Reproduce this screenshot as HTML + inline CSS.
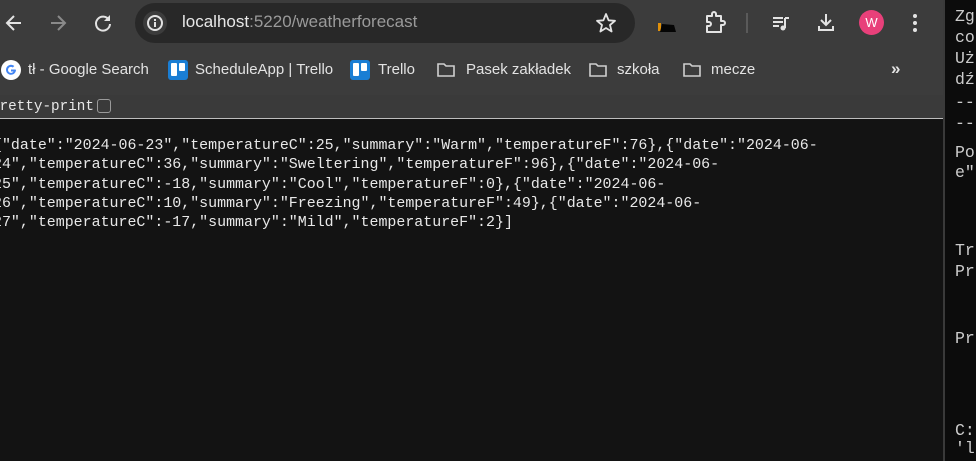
<!DOCTYPE html>
<html><head><meta charset="utf-8"><style>
*{margin:0;padding:0;box-sizing:border-box}
body{width:976px;height:461px;overflow:hidden;background:#131313;position:relative;font-family:"Liberation Sans",sans-serif}
.abs{position:absolute}
#top{left:0;top:0;width:943px;height:95px;background:#3c3c3c}
#omni{left:135px;top:3px;width:500px;height:40px;border-radius:20px;background:#282828}
.bm{position:absolute;top:61px;font-size:15px;color:#e3e3e3;white-space:nowrap}
#pp{left:0;top:95px;width:943px;height:24px;background:#3a3a3a;border-bottom:1px solid #bdbdbd}
#json{left:-7px;top:137px;font-family:"Liberation Mono",monospace;font-size:14.95px;line-height:19.3px;color:#e8e8e8;white-space:pre}
#term{left:943px;top:0;width:33px;height:461px;background:#0c0c0c;border-left:2px solid #3a3a3a}
.t{position:absolute;left:10px;font-family:"Liberation Mono","Noto Sans CJK JP",monospace;font-size:16.5px;color:#cccccc;white-space:pre}
svg{position:absolute}
</style></head><body>
<div id="top" class="abs"></div>
<div id="omni" class="abs"></div>
<svg style="left:3px;top:12px" width="22" height="22" viewBox="0 0 22 22"><path d="M18 11H5M11 4L4 11L11 18" stroke="#e3e3e3" stroke-width="2" fill="none"/></svg>
<svg style="left:47px;top:12px" width="22" height="22" viewBox="0 0 22 22"><path d="M4 11H17M11 4L18 11L11 18" stroke="#8a8a8a" stroke-width="2" fill="none"/></svg>
<svg style="left:92px;top:12px" width="22" height="22" viewBox="0 0 22 22"><path d="M17 8A7 7 0 1 0 18 12" stroke="#e3e3e3" stroke-width="2" fill="none"/><path d="M18 3V9H12Z" fill="#e3e3e3"/></svg>
<svg style="left:143px;top:11px" width="24" height="24" viewBox="0 0 24 24"><circle cx="12" cy="12" r="12" fill="#3c3c3c"/><circle cx="12" cy="12" r="7" stroke="#e3e3e3" stroke-width="2" fill="none"/><rect x="11" y="11" width="2" height="5" fill="#e3e3e3"/><rect x="11" y="8" width="2" height="2" fill="#e3e3e3"/></svg>
<div class="abs" style="left:182px;top:12px;font-size:17px;color:#e8e8e8">localhost<span style="color:#9a9a9a">:5220/weatherforecast</span></div>
<svg style="left:595px;top:12px" width="22" height="22" viewBox="0 0 22 22"><path d="M11 2L13.6 8.3L20 8.8L15 13L16.6 19.5L11 16L5.4 19.5L7 13L2 8.8L8.4 8.3Z" stroke="#e3e3e3" stroke-width="1.8" fill="none" stroke-linejoin="round"/></svg>
<svg style="left:656px;top:18px" width="22" height="16" viewBox="0 0 22 16"><path d="M2 5h3v8H2z" fill="#e0900a"/><path d="M4 14L6 6L18 7L20 14Z" fill="#050505"/></svg>
<svg style="left:704px;top:11px" width="22" height="24" viewBox="0 0 22 24"><path d="M3 5H8V3A2 2 0 0 1 12 3V5H17V10H19A2 2 0 0 1 19 14H17V21H3V15H5A2 2 0 0 0 5 11H3Z" stroke="#e3e3e3" stroke-width="2" fill="none" stroke-linejoin="round"/></svg>
<div class="abs" style="left:746px;top:13px;width:2px;height:20px;background:#5a5a5a"></div>
<svg style="left:770px;top:12px" width="22" height="22" viewBox="0 0 22 22"><path d="M3 6h10M3 10h10M3 14h6" stroke="#e3e3e3" stroke-width="2"/><path d="M15 6h4M15 6v10" stroke="#e3e3e3" stroke-width="2"/><circle cx="13" cy="16" r="2.5" fill="#e3e3e3"/></svg>
<svg style="left:815px;top:11px" width="22" height="22" viewBox="0 0 22 22"><path d="M11 3V14M6 9L11 14L16 9M4 15V19H18V15" stroke="#e3e3e3" stroke-width="2" fill="none"/></svg>
<div class="abs" style="left:859px;top:10px;width:25px;height:25px;border-radius:50%;background:#e8407a;color:#fff;font-size:13px;text-align:center;line-height:25px">W</div>
<svg style="left:910px;top:12px" width="10" height="22" viewBox="0 0 10 22"><circle cx="5" cy="4" r="2" fill="#e3e3e3"/><circle cx="5" cy="11" r="2" fill="#e3e3e3"/><circle cx="5" cy="18" r="2" fill="#e3e3e3"/></svg>
<svg style="left:1px;top:60px" width="20" height="20" viewBox="0 0 20 20"><circle cx="10" cy="10" r="10" fill="#fff"/><path d="M14.5 9.5H10V11.5H12.5A3 3 0 1 1 11.8 7.5L13.3 6A5 5 0 1 0 15 10Z" fill="#4285f4"/></svg>
<div class="bm" style="left:28px">tł - Google Search</div>
<svg style="left:168px;top:60px" width="20" height="20" viewBox="0 0 20 20"><rect width="20" height="20" rx="3" fill="#1a7ed4"/><rect x="3" y="3" width="6" height="13" rx="1" fill="#fff"/><rect x="11" y="3" width="6" height="8" rx="1" fill="#fff"/></svg>
<div class="bm" style="left:195px">ScheduleApp | Trello</div>
<svg style="left:350px;top:60px" width="20" height="20" viewBox="0 0 20 20"><rect width="20" height="20" rx="3" fill="#1a7ed4"/><rect x="3" y="3" width="6" height="13" rx="1" fill="#fff"/><rect x="11" y="3" width="6" height="8" rx="1" fill="#fff"/></svg>
<div class="bm" style="left:378px">Trello</div>
<svg style="left:436px;top:61px" width="20" height="18" viewBox="0 0 20 18"><path d="M2 3H8L10 5H18V15H2Z" stroke="#cfcfcf" stroke-width="1.6" fill="none"/></svg>
<div class="bm" style="left:466px">Pasek zakładek</div>
<svg style="left:588px;top:61px" width="20" height="18" viewBox="0 0 20 18"><path d="M2 3H8L10 5H18V15H2Z" stroke="#cfcfcf" stroke-width="1.6" fill="none"/></svg>
<div class="bm" style="left:617px">szkoła</div>
<svg style="left:682px;top:61px" width="20" height="18" viewBox="0 0 20 18"><path d="M2 3H8L10 5H18V15H2Z" stroke="#cfcfcf" stroke-width="1.6" fill="none"/></svg>
<div class="bm" style="left:711px">mecze</div>
<div class="bm" style="left:891px;font-size:17px;font-weight:bold;top:59px">»</div>
<div id="pp" class="abs"></div>
<div class="abs" style="left:-9px;top:99px;font-family:'Liberation Mono',monospace;font-size:14.3px;color:#e8e8e8">pretty-print</div>
<div class="abs" style="left:97px;top:99px;width:14px;height:14px;border:1px solid #9a9a9a;border-radius:3px"></div>
<div id="json" class="abs">{"date":"2024-06-23","temperatureC":25,"summary":"Warm","temperatureF":76},{"date":"2024-06-
24","temperatureC":36,"summary":"Sweltering","temperatureF":96},{"date":"2024-06-
25","temperatureC":-18,"summary":"Cool","temperatureF":0},{"date":"2024-06-
26","temperatureC":10,"summary":"Freezing","temperatureF":49},{"date":"2024-06-
27","temperatureC":-17,"summary":"Mild","temperatureF":2}]</div>
<div id="term" class="abs">
<div class="t" style="top:7px">Zg</div>
<div class="t" style="top:28px">co</div>
<div class="t" style="top:49px">Uż</div>
<div class="t" style="top:70px">dź</div>
<div class="t" style="top:93px">--</div>
<div class="t" style="top:114px">--</div>
<div class="t" style="top:143px">Po</div>
<div class="t" style="top:163px">e"</div>
<div class="t" style="top:241px">Tr</div>
<div class="t" style="top:262px">Pr</div>
<div class="t" style="top:329px">Pr</div>
<div class="t" style="top:421px">C:</div>
<div class="t" style="top:439px">'l</div>
</div>
</body></html>
